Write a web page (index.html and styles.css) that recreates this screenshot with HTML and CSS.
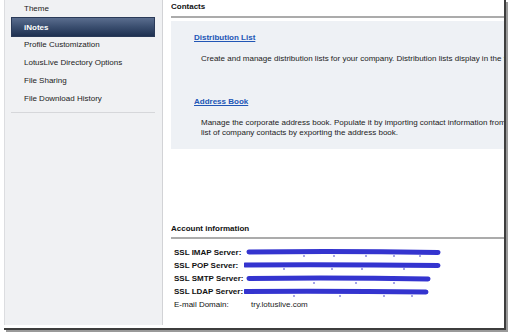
FILE: index.html
```html
<!DOCTYPE html>
<html lang="en">
<head>
  <meta charset="UTF-8" />
  <title>LotusLive Settings - iNotes</title>
  <link rel="stylesheet" href="styles.css">
</head>
<body>

  <div class="frame">
    <!-- Left settings menu -->
    <div class="sidebar">
      <div class="menu-item">Theme</div>
      <div class="menu-item selected">iNotes</div>
      <div class="menu-item">Profile Customization</div>
      <div class="menu-item">LotusLive Directory Options</div>
      <div class="menu-item">File Sharing</div>
      <div class="menu-item">File Download History</div>
      <div class="menu-sep"></div>
    </div>

    <div class="content">
      <div class="section-title">Contacts</div>
      <div class="panel">
        <a class="panel-link" href="#">Distribution List</a>
        <p class="panel-desc">Create and manage distribution lists for your company. Distribution lists display in the type-ahead list.</p>

        <a class="panel-link second" href="#">Address Book</a>
        <p class="panel-desc">Manage the corporate address book. Populate it by importing contact information from a file.<br>list of company contacts by exporting the address book.</p>
      </div>

      <div class="section-title account">Account information</div>
      <div class="account-rows">
        <div class="label">SSL IMAP Server:</div>
        <div class="value"><svg class="scribble" width="200" height="13" viewBox="0 0 200 13"><path d="M5 6 Q100 5 194 6.5" /><path class="tick" d="M60 9v2M90 9v2M122 9v2M150 9v2M176 9v2" /></svg></div>

        <div class="label">SSL POP Server:</div>
        <div class="value"><svg class="scribble" width="200" height="13" viewBox="0 0 200 13"><path d="M1 6 Q100 5.5 194 6.5" /><path class="tick" d="M40 9v2M88 9v2M118 9v2M160 9v2" /></svg></div>

        <div class="label">SSL SMTP Server:</div>
        <div class="value"><svg class="scribble" width="200" height="13" viewBox="0 0 200 13"><path d="M5 6.5 Q95 5.5 184 7" /><path class="tick" d="M70 10v2M112 10v2M150 10v2" /></svg></div>

        <div class="label">SSL LDAP Server:</div>
        <div class="value"><svg class="scribble" width="200" height="13" viewBox="0 0 200 13"><path d="M1 6.5 Q95 6 182 7" /><path class="tick" d="M50 10v2M96 10v2M140 10v2M168 10v2" /></svg></div>

        <div class="label plain">E-mail Domain:</div>
        <div class="value domain">try.lotuslive.com</div>
      </div>
    </div>
  </div>

</body>
</html>
```

FILE: styles.css
```css
/* Reset and Base */
* {
  box-sizing: border-box;
  margin: 0;
  padding: 0;
}

body {
  font-family: 'Liberation Sans', Arial, sans-serif;
  font-size: 8px;
  color: #1a1a1a;
  background: #fff;
  width: 508px;
  height: 332px;
  overflow: hidden;
}

/* Window frame with the dark edge on the right and bottom */
.frame {
  display: flex;
  margin-left: 4px;
  width: 502px;
  height: 330px;
  padding-bottom: 3px;
  border-right: 2px solid #3e3e3e;
  border-bottom: 2px solid #3e3e3e;
  box-shadow: 2px 2px 0 #9a9a9a;
  overflow: hidden;
}

/* Sidebar */
.sidebar {
  flex: 0 0 159px;
  background: #f0f1f3;
  border-left: 1px solid #dcdde0;
  border-right: 1px solid #d2d3d6;
  padding: 0 7px 0 6px;
}

.menu-item {
  height: 18px;
  line-height: 18px;
  padding-left: 13px;
  color: #222;
  white-space: nowrap;
}

.menu-item.selected {
  height: 20px;
  line-height: 20px;
  margin: -1px 0;
  color: #fff;
  font-weight: bold;
  background: linear-gradient(to bottom, #5a6d8e 0%, #3a4e6f 50%, #1f3151 100%);
  border: 1px solid #2a3a58;
  padding-left: 12px;
}

.menu-sep {
  margin-top: 4px;
  border-top: 1px solid #d6d7da;
}

/* Main content */
.content {
  flex: 1;
  margin-left: 8px;
  overflow: hidden;
}

.section-title {
  font-weight: bold;
  line-height: 14px;
  padding-bottom: 2px;
  border-bottom: 2px solid #ababab;
  color: #111;
}

.panel {
  margin-top: 3px;
  background: #eef1f5;
  padding: 12px 0 11px 23px;
}

.panel-link {
  display: block;
  line-height: 10px;
  font-weight: bold;
  color: #2156b5;
  text-decoration: underline;
}

.panel-link.second {
  margin-top: 33px;
}

.panel-desc {
  margin-top: 11px;
  padding-left: 7px;
  line-height: 10px;
  white-space: nowrap;
  color: #222;
}

.section-title.account {
  margin-top: 73px;
  padding-bottom: 1px;
}

.account-rows {
  display: grid;
  grid-template-columns: 70px 1fr;
  padding: 7px 0 0 3px;
  line-height: 13px;
}

.label {
  font-weight: bold;
  white-space: nowrap;
  color: #111;
}

.label.plain {
  font-weight: normal;
  color: #111;
}

.value {
  height: 13px;
}

.value.domain {
  padding-left: 7px;
  color: #222;
}

.scribble {
  display: block;
}

.scribble path {
  fill: none;
  stroke: #3434cf;
  stroke-width: 5;
  stroke-linecap: round;
}

.scribble path.tick {
  stroke: #4a4ad0;
  stroke-width: 1;
  stroke-linecap: butt;
}
```
